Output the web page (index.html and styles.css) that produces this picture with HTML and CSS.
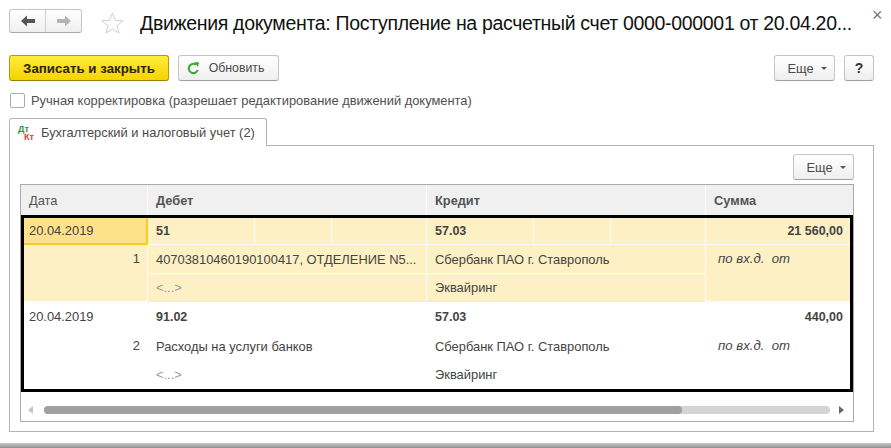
FILE: index.html
```html
<!DOCTYPE html>
<html lang="ru">
<head>
<meta charset="utf-8">
<title>Движения документа</title>
<link rel="stylesheet" href="styles.css">
</head>
<body>
<div class="page">
  <header class="titlebar">
    <div class="nav">
      <button class="nav-btn"><svg width="16" height="12" viewBox="0 0 16 12"><path d="M7 0.5 L1 6 L7 11.5 V8 H15 V4 H7 Z" fill="#555"/></svg></button>
      <button class="nav-btn"><svg width="16" height="12" viewBox="0 0 16 12"><path d="M9 0.5 L15 6 L9 11.5 V8 H1 V4 H9 Z" fill="#b5b5b5"/></svg></button>
    </div>
    <svg class="star" width="23" height="22" viewBox="0 0 24 23"><path d="M12 1.2 L15 8.6 L23 9.2 L16.8 14.3 L18.8 22 L12 17.8 L5.2 22 L7.2 14.3 L1 9.2 L9 8.6 Z" fill="#fff" stroke="#c8ccd0" stroke-width="1"/></svg>
    <h1 class="title">Движения документа: Поступление на расчетный счет 0000-000001 от 20.04.20...</h1>
    <span class="close">×</span>
  </header>

  <div class="toolbar">
    <button class="btn btn-primary">Записать и закрыть</button>
    <button class="btn btn-refresh"><svg width="13" height="13" viewBox="0 0 14 14"><path d="M11.6 8.6 A5 5 0 1 1 9.6 2.8" fill="none" stroke="#3fa535" stroke-width="2.2"/><path d="M8 0 L13 0.6 L11.6 5.4 Z" fill="#3fa535"/></svg>Обновить</button>
    <span class="spacer"></span>
    <button class="btn btn-more">Еще<i class="caret"></i></button>
    <button class="btn btn-help">?</button>
  </div>

  <label class="check"><span class="check-box"></span>Ручная корректировка (разрешает редактирование движений документа)</label>

  <div class="tabs">
    <div class="tab"><span class="tab-icon"><span class="dt">Дт</span><span class="kt">Кт</span></span>Бухгалтерский и налоговый учет (2)</div>
  </div>

  <section class="panel">
    <div class="panel-bar"><button class="btn btn-more">Еще<i class="caret"></i></button></div>
    <div class="table">
      <div class="thead">
        <div class="th th-date">Дата</div>
        <div class="th th-acc b th-b">Дебет</div>
        <div class="th th-acc b th-b">Кредит</div>
        <div class="th th-sum b th-b">Сумма</div>
      </div>
      <div class="records">
        <div class="rec rec-a">
          <div class="c c-date selected">20.04.2019</div>
          <div class="c c-num">1</div>
          <div class="c c-acc split b"><span class="s1">51</span><span class="s2"></span><span class="s3"></span></div>
          <div class="c c-acc">40703810460190100417, ОТДЕЛЕНИЕ N5...</div>
          <div class="c c-acc muted last">&lt;...&gt;</div>
          <div class="c c-acc split b"><span class="s1">57.03</span><span class="s2"></span><span class="s3"></span></div>
          <div class="c c-acc">Сбербанк ПАО г. Ставрополь</div>
          <div class="c c-acc last">Эквайринг</div>
          <div class="c c-sum b">21 560,00</div>
          <div class="c c-note">по вх.д.  от</div>
        </div>
        <div class="rec rec-b">
          <div class="c c-date">20.04.2019</div>
          <div class="c c-num">2</div>
          <div class="c c-acc b">91.02</div>
          <div class="c c-acc">Расходы на услуги банков</div>
          <div class="c c-acc muted last">&lt;...&gt;</div>
          <div class="c c-acc b">57.03</div>
          <div class="c c-acc">Сбербанк ПАО г. Ставрополь</div>
          <div class="c c-acc last">Эквайринг</div>
          <div class="c c-sum b">440,00</div>
          <div class="c c-note">по вх.д.  от</div>
        </div>
      </div>
      <div class="hscroll">
        <i class="arrow arrow-l"></i>
        <div class="track"><div class="thumb"></div></div>
        <i class="arrow arrow-r"></i>
      </div>
    </div>
  </section>
</div>
<div class="bottom-bar"></div>
</body>
</html>
```
FILE: styles.css
```css
* { box-sizing: border-box; }
html, body { margin: 0; height: 448px; overflow: hidden; background: #fff; }
body { font: 12.9px "Liberation Sans", Arial, sans-serif; color: #4a4a4a; position: relative; }
.page { width: 891px; padding: 9px 0 0 9px; }
button { font: inherit; margin: 0; }

.titlebar { display: flex; align-items: center; height: 24px; }
.nav { display: flex; width: 73px; height: 24px; border: 1px solid #c4c4c4; border-bottom-color: #a8a8a8; border-radius: 3px; background: linear-gradient(#fff, #efefef); overflow: hidden; }
.nav-btn { flex: 1; display: flex; align-items: center; justify-content: center; border: 0; padding: 0; background: none; }
.nav-btn + .nav-btn { border-left: 1px solid #d0d0d0; }
.star { margin-left: 19px; margin-top: 3px; flex: none; }
.title { margin: 3px 0 0 16px; font-weight: 400; font-size: 19.5px; letter-spacing: -0.32px; color: #111; white-space: nowrap; line-height: 24px; width: 714px; flex: none; }
.close { margin-left: 18px; font-size: 18px; line-height: 18px; color: #777; margin-top: -12px; }

.toolbar { display: flex; margin-top: 22px; width: 865px; height: 26px; }
.spacer { flex: 1; }
.btn { height: 26px; border: 1px solid #c4c4c4; border-bottom-color: #a0a0a0; border-radius: 3px; background: linear-gradient(#fff, #efefef); color: #4a4a4a; padding: 0; display: inline-flex; align-items: center; justify-content: center; font-size: 12.9px; flex: none; }
.btn-primary { width: 160px; font-weight: 700; font-size: 13.3px; color: #2c2400; background: linear-gradient(#ffec3c, #f5d400); border-color: #b89a10; border-bottom-color: #9a8000; }
.btn-refresh { width: 101px; margin-left: 9px; gap: 9px; font-size: 12.3px; padding-right: 6px; }
.btn-more { width: 61px; padding-left: 5px; }
.btn-help { width: 30px; margin-left: 9px; font-size: 14px; font-weight: 700; color: #333; }
.caret { width: 0; height: 0; margin-left: 7px; border: 3px solid transparent; border-top: 3px solid #555; border-bottom: 0; }

.check { display: flex; align-items: center; height: 16px; margin-top: 11px; color: #4f4f4f; }
.check-box { width: 15px; height: 15px; margin: 0 6px 0 1px; border: 1px solid #aaa; border-radius: 2px; background: #fff; }

.tabs { display: flex; margin-top: 10px; height: 28px; position: relative; z-index: 1; }
.tab { width: 258px; height: 28px; display: flex; align-items: center; border: 1px solid #b4b4b4; border-bottom: 0; border-radius: 3px 3px 0 0; background: #fff; color: #4a4a4a; }
.tab-icon { width: 31px; height: 20px; flex: none; display: flex; flex-direction: column; font-size: 9px; font-weight: 700; line-height: 8px; padding: 2px 0 0 8px; }
.dt { color: #1d9a3a; }
.kt { color: #e0383a; padding-left: 6px; }

.panel { margin-top: -1px; width: 865px; height: 287px; border: 1px solid #b4b4b4; padding: 8px 19px 0 10px; }
.panel-bar { display: flex; justify-content: flex-end; height: 26px; }
.table { width: 834px; height: 238px; margin-top: 4px; border: 1px solid #aaa; }
.thead { display: grid; grid-template-columns: 127px 279px 279px 147px; height: 30px; background: #f0f0f0; color: #555; }
.th { display: flex; align-items: center; padding-left: 8px; border-right: 1px solid #fff; }
.th:last-child { border-right: 0; }
.b { font-weight: 700; font-size: 12.5px; }
.th-b { font-size: 12.8px; }

.records { border: 3px solid #000; }
.rec { display: grid; grid-template-columns: 124px 279px 279px 144px; grid-auto-flow: column; }
.rec-a { grid-template-rows: 27px 29px 28px; background: #fdf0c5; }
.rec-b { grid-template-rows: 30px 29px 28px; background: #fff; }
.c { display: flex; align-items: center; padding: 0 8px; white-space: pre; color: #444; border-right: 1px solid #fff; border-bottom: 1px solid #fff; }
.rec-b .c { border-color: transparent; }
.rec-a .c.last { border-bottom-color: #f0ead8; }
.c-date { padding-left: 5px; }
.selected { background: #fee28a; border-right: 2px solid #fccb21; border-bottom: 2px solid #fccb21 !important; }
.c-num { grid-row: 2 / 4; justify-content: flex-end; align-items: flex-start; padding: 6px 7px 0 0; }
.c-sum { justify-content: flex-end; padding: 0 7px 0 0; border-right: 0; }
.c-note { grid-row: 2 / 4; align-items: flex-start; padding: 6px 0 0 12px; font-style: italic; border-right: 0; font-size: 13.2px; }
.muted { color: #9a9a9a; }
.split { padding: 0; align-items: stretch; }
.split span { display: flex; align-items: center; border-right: 1px solid #fff; }
.s1 { width: 107px; padding-left: 8px; }
.s2 { width: 77px; }
.s3 { flex: 1; border-right: 0 !important; }

.hscroll { display: flex; align-items: center; height: 29px; padding: 7px 0 0 7px; }
.arrow { width: 0; height: 0; border: 4px solid transparent; flex: none; }
.arrow-l { border-right: 5px solid #c4c4c4; border-left: 0; }
.arrow-r { border-left: 5px solid #666; border-right: 0; margin-left: 9px; }
.track { width: 786px; height: 8px; margin-left: 11px; border-radius: 4px; background: #d4d4d4; }
.thumb { width: 638px; height: 8px; border-radius: 4px; background: #a0a0a0; }

.bottom-bar { position: absolute; left: 0; right: 0; bottom: 0; height: 5px; background: linear-gradient(#c8c8c8, #8f8f8f); }
```
